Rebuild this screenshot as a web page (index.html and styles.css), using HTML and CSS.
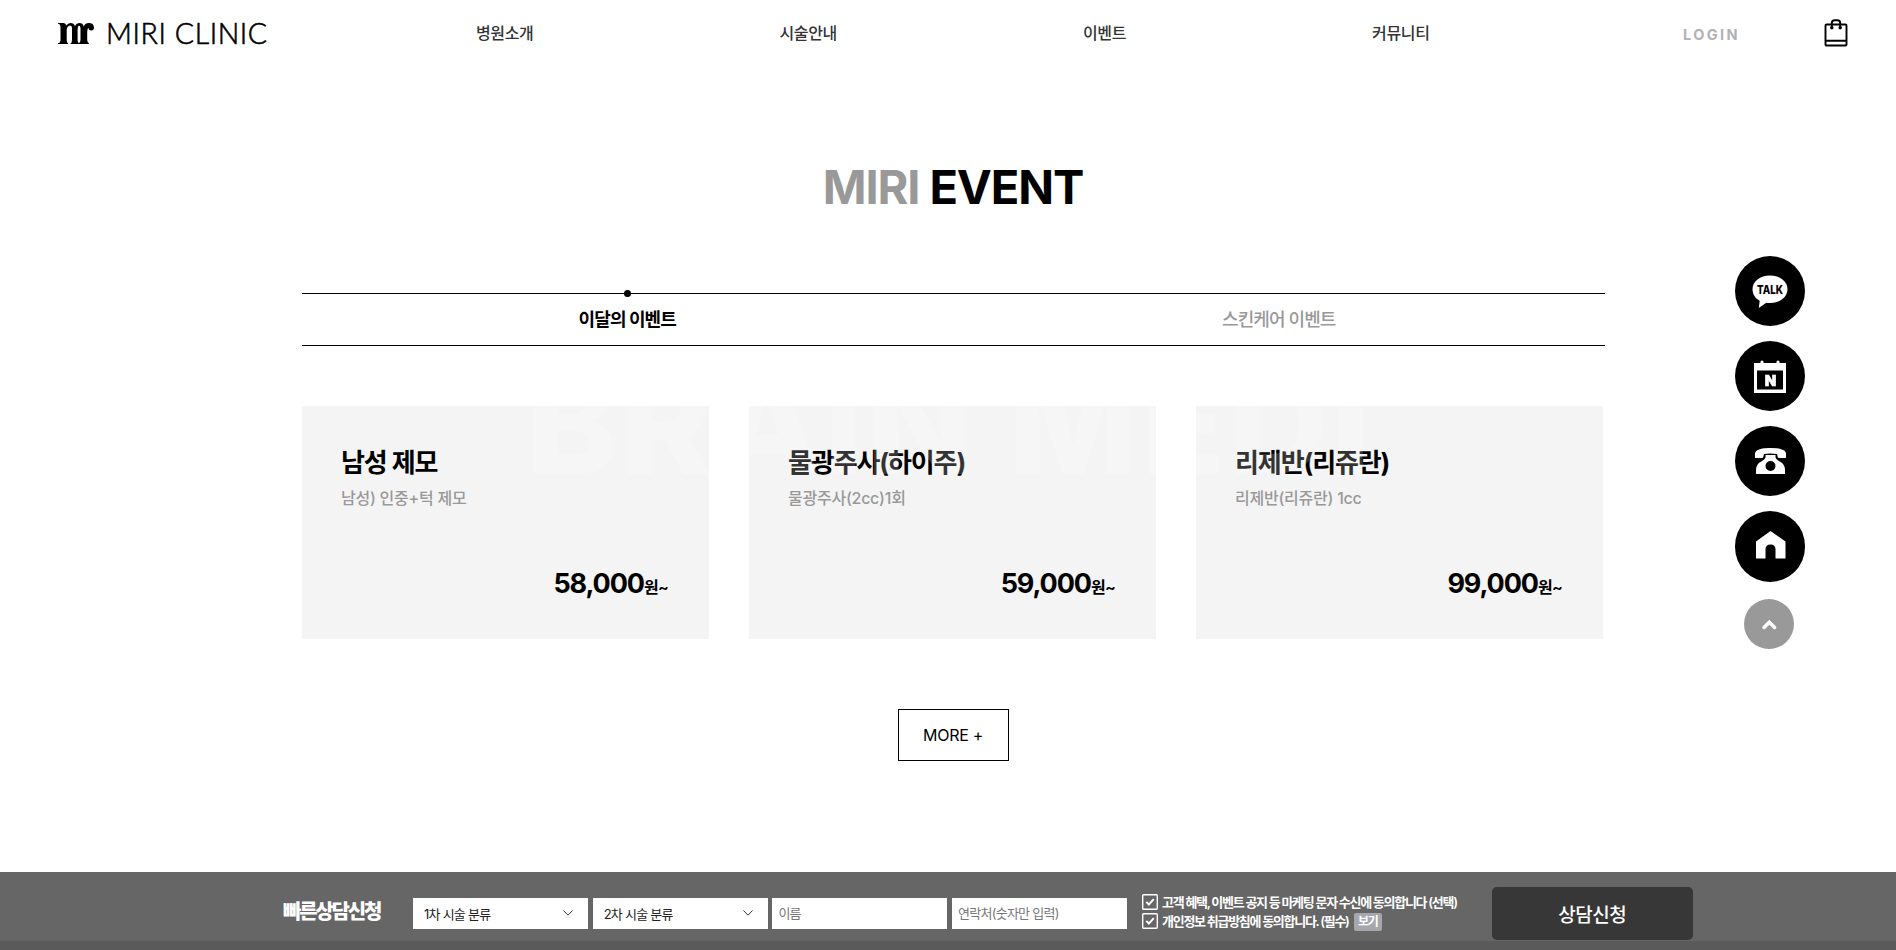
FILE: index.html
```
<!DOCTYPE html>
<html lang="ko">
<head>
  <meta charset="UTF-8">
  <title>MIRI CLINIC</title>
  <link rel="stylesheet" href="styles.css">
</head>
<body>
  <header class="header">
    <a class="logo">
      <svg class="logo-mark" width="36" height="21" viewBox="0 0 36 21">
        <path d="M0 0h5.500Q8 .4 8.300 2.500Q9.800 0 12.500 0Q16 0 16.900 3Q18.400 0 21.200 0Q25 0 25.700 3.400Q27.200 0 30.800 0Q35.600 0 36 4.300Q36 7.500 33.300 7.600Q30.600 7.500 30.500 4.800Q29.200 5.800 29.200 9V17Q29.300 19.600 31 20.400V21H20.500V20.400Q22.500 20 22.500 17V5Q22.300 2.400 20.800 2.400Q19.600 3.200 19.600 7V17Q19.700 19.800 21 20.400V21H12Q14 20 14 17V5Q14 2.500 12.200 2.400Q8.700 3 8.700 7V17Q8.700 19.800 10 20.400V21H0V20.300Q2.500 20 2.500 17V4.500Q2.500 1 0 .7Z"/>
      </svg>
      <span class="logo-text">MIRI CLINIC</span>
    </a>
    <nav class="nav">
      <a>병원소개</a>
      <a>시술안내</a>
      <a>이벤트</a>
      <a>커뮤니티</a>
    </nav>
    <a class="login">LOGIN</a>
    <a class="cart">
      <svg width="24" height="28" viewBox="0 0 24 28" fill="none" stroke="#000" stroke-width="1.900">
        <rect x="1.500" y="5.500" width="21" height="21" rx="1"/>
        <path d="M1.500 21.800h21M7.800 9V4Q7.800 1.200 10.600 1.200h2.800Q16.200 1.200 16.200 4v5"/>
        <circle cx="7.800" cy="8.800" r=".8"/>
        <circle cx="16.200" cy="8.800" r=".8"/>
      </svg>
    </a>
  </header>

  <main class="event">
    <h2 class="event-title"><span>MIRI</span> EVENT</h2>

    <ul class="tabs">
      <li class="active">이달의 이벤트</li>
      <li>스킨케어 이벤트</li>
    </ul>

    <div class="cards">
      <div class="card">
        <h3>남성 제모</h3>
        <p class="desc">남성) 인중+턱 제모</p>
        <p class="price">58,000<small>원~</small></p>
      </div>
      <div class="card">
        <h3>물광주사(하이주)</h3>
        <p class="desc">물광주사(2cc)1회</p>
        <p class="price">59,000<small>원~</small></p>
      </div>
      <div class="card">
        <h3>리제반(리쥬란)</h3>
        <p class="desc">리제반(리쥬란) 1cc</p>
        <p class="price">99,000<small>원~</small></p>
      </div>
      <div class="watermark"><span>BRAIN MEDI</span></div>
    </div>

    <a class="more">MORE +</a>
  </main>

  <aside class="side">
    <a class="side-btn">
      <svg width="70" height="70" viewBox="0 0 70 70">
        <path fill="#fff" d="M35 19.500c-10 0-17.500 6-17.500 13.700 0 5 3 9.200 7.200 11.600L23.800 52l7.500-5.300c1.200.2 2.400.3 3.700.3 10 0 17.500-6 17.500-13.800S45 19.500 35 19.500z"/>
        <text class="talk" x="35" y="38" text-anchor="middle" textLength="26" lengthAdjust="spacingAndGlyphs">TALK</text>
      </svg>
    </a>
    <a class="side-btn">
      <svg width="70" height="70" viewBox="0 0 70 70">
        <path fill="#fff" fill-rule="evenodd" d="M19 22h6.500v-1.500q1.500-2 3 0V22h13v-1.500q1.500-2 3 0V22H51v30H19zM22 29.500v19h26v-19z"/>
        <text class="naver" x="35.500" y="44.500" text-anchor="middle">N</text>
      </svg>
    </a>
    <a class="side-btn">
      <svg width="70" height="70" viewBox="0 0 70 70">
        <path fill="#fff" d="M20 32v-4.500q.5-5.500 15.500-5.500T51 27.500V32h-7.500q-1-.5-1.500-4-6.500-1-13 0-.5 3.500-1.500 4z"/>
        <path fill="#fff" fill-rule="evenodd" d="M30.500 29H33h5H40.500v2.500q1 2.500 6 5 3.500 3 3.500 7.500v4H21v-4q0-4.500 3.500-7.500 5-2.500 6-5zM35.500 35a5 5 0 1 0 0 10a5 5 0 1 0 0-10z"/>
      </svg>
    </a>
    <a class="side-btn">
      <svg width="70" height="70" viewBox="0 0 70 70">
        <path fill="#fff" d="M21 30.500 35.500 20l15 10.500V47.500H40.500v-9q0-5-5-5t-5 5v9H21z"/>
      </svg>
    </a>
    <a class="side-btn top">
      <svg width="50" height="50" viewBox="0 0 50 50" fill="none" stroke="#fff" stroke-width="3.500" stroke-linecap="round">
        <path d="m20 28.500 5.300-5.300 5.300 5.300"/>
      </svg>
    </a>
  </aside>

  <form class="quick">
    <strong class="quick-title">빠른상담신청</strong>
    <div class="fields">
      <div class="select">1차 시술 분류
        <svg width="10" height="6" viewBox="0 0 10 6" fill="none" stroke="#333"><path d="m.5.500 4.500 4.700L9.500.500"/></svg>
      </div>
      <div class="select">2차 시술 분류
        <svg width="10" height="6" viewBox="0 0 10 6" fill="none" stroke="#333"><path d="m.5.500 4.500 4.700L9.500.500"/></svg>
      </div>
      <input type="text" placeholder="이름">
      <input type="text" placeholder="연락처(숫자만 입력)">
    </div>
    <div class="agree">
      <label>
        <svg width="16" height="16" viewBox="0 0 16 16" fill="none" stroke="#fff" stroke-width="1.400"><rect x=".7" y=".7" width="14.600" height="14.600" rx="1"/><path stroke-width="1.900" d="m4.300 7.800 2.600 2.700 4.900-5.300"/></svg>
        <span>고객 혜택, 이벤트 공지 등 마케팅 문자 수신에 동의합니다 (선택)</span>
      </label>
      <label>
        <svg width="16" height="16" viewBox="0 0 16 16" fill="none" stroke="#fff" stroke-width="1.400"><rect x=".7" y=".7" width="14.600" height="14.600" rx="1"/><path stroke-width="1.900" d="m4.300 7.800 2.600 2.700 4.900-5.300"/></svg>
        <span>개인정보 취급방침에 동의합니다. (필수)</span>
        <em>보기</em>
      </label>
    </div>
    <button type="button" class="submit">상담신청</button>
  </form>
</body>
</html>
```
FILE: styles.css
```
* {
  margin: 0;
  padding: 0;
  box-sizing: border-box;
}

body {
  height: 950px;
  overflow: hidden;
  font-family: Inter, 'Noto Sans CJK KR', sans-serif;
  color: #000;
  background: #fff;
}

ul {
  list-style: none;
}

/* header */
.header {
  display: flex;
  align-items: center;
  height: 66px;
  padding-left: 58px;
}

.logo {
  display: flex;
  align-items: center;
  gap: 12px;
  width: 418px;
}

.logo-mark {
  margin-top: 1px;
}

.logo-text {
  font-family: Lato, sans-serif;
  font-size: 28.5px;
  font-weight: 300;
  line-height: 28px;
  letter-spacing: 0.6px;
  white-space: nowrap;
  -webkit-text-stroke: 0.6px #000;
}

.nav {
  display: flex;
  gap: 246px;
  width: 1207px;
  padding-bottom: 3px;
  font-size: 16px;
  font-weight: 500;
  color: #333;
  letter-spacing: -0.35px;
  white-space: nowrap;
}

.login {
  width: 141px;
  padding-top: 2px;
  font-size: 14.5px;
  font-weight: 700;
  letter-spacing: 2.4px;
  color: #b2b2b2;
}

.cart svg {
  display: block;
}

/* event */
.event {
  width: 1303px;
  height: 806px;
  margin-left: 301.5px;
  padding-top: 92px;
}

.event-title {
  height: 135px;
  font-size: 47px;
  line-height: 57px;
  font-weight: 700;
  text-align: center;
  letter-spacing: -1.1px;
}

.event-title span {
  color: #999;
}

.tabs {
  display: flex;
  height: 53px;
  border-top: 1px solid #000;
  border-bottom: 1px solid #000;
}

.tabs li {
  position: relative;
  flex: 1;
  font-size: 18px;
  font-weight: 500;
  line-height: 52px;
  text-align: center;
  color: #999;
  letter-spacing: -0.9px;
}

.tabs .active {
  font-weight: 700;
  color: #000;
}

.tabs .active::before {
  content: "";
  position: absolute;
  top: -4px;
  left: 50%;
  width: 7px;
  height: 7px;
  margin-left: -3.5px;
  border-radius: 50%;
  background: #000;
}

.cards {
  position: relative;
  display: grid;
  grid-template-columns: repeat(3, 407px);
  gap: 40px;
  margin-top: 60px;
}

.card {
  height: 233px;
  padding: 38px 40.5px 0 39.5px;
  background: #f4f4f4;
}

.card h3 {
  font-size: 26px;
  font-weight: 700;
  line-height: 38px;
  letter-spacing: -1.1px;
}

.desc {
  margin-top: 3px;
  font-size: 16px;
  font-weight: 500;
  line-height: 26px;
  color: #999;
  letter-spacing: -0.25px;
}

.price {
  margin-top: 53px;
  font-size: 27px;
  font-weight: 700;
  line-height: 40px;
  text-align: right;
  letter-spacing: -1.1px;
}

.price small {
  font-size: 16px;
  font-weight: 600;
  letter-spacing: -0.7px;
}

/* big faded lettering that runs over the cards */
.watermark {
  position: absolute;
  inset: 0;
  overflow: hidden;
  pointer-events: none;
}

.watermark span {
  position: absolute;
  left: 224px;
  bottom: 146px;
  font-size: 138px;
  font-weight: 800;
  line-height: 138px;
  letter-spacing: 3px;
  white-space: nowrap;
  color: rgba(255, 255, 255, 0.2);
}

.more {
  display: block;
  width: 111px;
  height: 52px;
  margin: 70px auto 0;
  border: 1px solid #000;
  font-size: 16px;
  line-height: 50px;
  text-align: center;
  letter-spacing: -0.3px;
}

/* floating buttons */
.side {
  position: fixed;
  top: 255.5px;
  right: 91px;
  display: flex;
  flex-direction: column;
  align-items: center;
  gap: 14.7px;
}

.side-btn {
  width: 70.5px;
  height: 70.5px;
  border-radius: 50%;
  background: #000;
}

.side-btn svg {
  display: block;
}

.side-btn.top {
  width: 50px;
  height: 50px;
  margin: 2.5px 2px 0 0;
  background: #999;
}

.talk {
  font-size: 12px;
  font-weight: 800;
}

.naver {
  font-size: 15px;
  font-weight: 900;
  fill: #fff;
  stroke: #fff;
  stroke-width: 0.6px;
}

/* quick consult bar */
.quick {
  display: flex;
  height: 78px;
  padding-left: 283px;
  background: linear-gradient(#666 69px, #5b5a5a 69px);
  color: #fff;
}

.quick-title {
  width: 130px;
  padding-top: 25px;
  font-size: 20px;
  line-height: 30px;
  font-weight: 800;
  letter-spacing: -2.2px;
  white-space: nowrap;
}

.fields {
  display: grid;
  grid-template-columns: repeat(4, 175px);
  gap: 4.7px;
  height: 31px;
  margin-top: 26px;
}

.select,
.fields input {
  height: 31px;
  background: #fff;
  font-family: inherit;
  font-size: 13px;
  letter-spacing: -0.75px;
}

.select {
  display: flex;
  align-items: center;
  justify-content: space-between;
  padding: 0 15px 1px 11px;
  color: #222;
}

.fields input {
  width: 100%;
  border: 0;
  padding: 0 6px 1px;
}

.fields input::placeholder {
  color: #777;
}

.agree {
  width: 350px;
  margin: 22px 0 0 15px;
}

.agree label {
  display: flex;
  align-items: center;
  gap: 4px;
  height: 19px;
  padding-bottom: 3px;
  font-size: 13px;
  font-weight: 600;
  line-height: 16px;
  letter-spacing: -1.28px;
  white-space: nowrap;
}

.agree svg {
  flex: none;
}

.agree em {
  width: 28px;
  height: 18px;
  margin: 2px 0 0 1px;
  border-radius: 2px;
  background: #a6a7ad;
  font-size: 12px;
  font-style: normal;
  line-height: 18px;
  text-align: center;
}

.submit {
  width: 200.5px;
  height: 52.5px;
  margin-top: 15px;
  border: 0;
  border-radius: 5px;
  background: #373737;
  color: #fff;
  font-family: inherit;
  font-size: 19px;
  font-weight: 500;
  letter-spacing: -0.5px;
}
```
